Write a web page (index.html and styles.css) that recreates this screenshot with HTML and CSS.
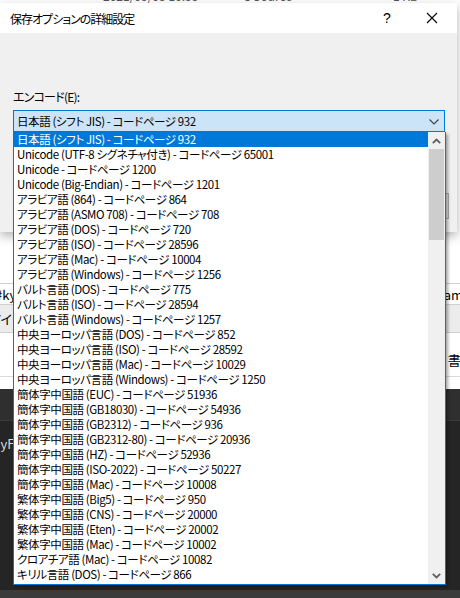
FILE: index.html
```html
<!DOCTYPE html>
<html lang="ja">

<head>
  <meta charset="UTF-8">
  <meta name="viewport" content="width=device-width, initial-scale=1.0">
  <title>保存オプションの詳細設定</title>
  <link rel="stylesheet" href="styles.css">
</head>

<body>

  <div class="desktop">

    <!-- アプリ (ダイアログの後ろ) -->
    <div class="app">
      <div class="file-row">
        <span class="file-date">2021/05/03 16:35</span>
        <span class="file-type">C Source</span>
        <span class="file-size">1 KB</span>
      </div>
      <div class="app-blank"></div>
      <div class="name-box">
        <span>#ky</span>
        <span>am</span>
      </div>
      <div class="tool-row">
        <span>アイ</span>
      </div>
      <div class="save-row">
        <span>書き</span>
      </div>
      <div class="app-gap"></div>
      <div class="dark-top"></div>
      <div class="dark-panel">
        <span>MyF</span>
      </div>
      <div class="status-bar"></div>
    </div>

    <!-- ダイアログ -->
    <div class="dialog">
      <div class="titlebar">
        <span class="title">保存オプションの詳細設定</span>
        <span class="title-btn help">?</span>
        <span class="title-btn close">
          <svg width="12" height="12" viewBox="0 0 12 12">
            <path d="M1 1 L11 11 M11 1 L1 11" stroke="#000" stroke-width="1.1" fill="none" />
          </svg>
        </span>
      </div>
      <div class="dialog-body">
        <div class="field-label">エンコード(E):</div>
        <div class="combo">
          <span>日本語 (シフト JIS) - コードページ 932</span>
          <svg class="chevron" width="10" height="6" viewBox="0 0 10 6">
            <path d="M0.5 0.5 L5 5 L9.5 0.5" stroke="#444" stroke-width="1.2" fill="none" />
          </svg>
        </div>
        <div class="ok-button"></div>
      </div>
    </div>

    <!-- ドロップダウン -->
    <div class="dropdown">
      <ul class="options" id="options"></ul>
      <div class="scrollbar">
        <div class="scroll-arrow">
          <svg width="9" height="6" viewBox="0 0 9 6">
            <path d="M0.8 5.2 L4.5 1.5 L8.2 5.2" stroke="#606060" stroke-width="1.8" fill="none" />
          </svg>
        </div>
        <div class="scroll-track">
          <div class="scroll-thumb"></div>
        </div>
        <div class="scroll-arrow">
          <svg width="9" height="6" viewBox="0 0 9 6">
            <path d="M0.8 0.8 L4.5 4.5 L8.2 0.8" stroke="#606060" stroke-width="1.8" fill="none" />
          </svg>
        </div>
      </div>
    </div>

  </div>

  <script>
    let encodings = [
      '日本語 (シフト JIS) - コードページ 932',
      'Unicode (UTF-8 シグネチャ付き) - コードページ 65001',
      'Unicode - コードページ 1200',
      'Unicode (Big-Endian) - コードページ 1201',
      'アラビア語 (864) - コードページ 864',
      'アラビア語 (ASMO 708) - コードページ 708',
      'アラビア語 (DOS) - コードページ 720',
      'アラビア語 (ISO) - コードページ 28596',
      'アラビア語 (Mac) - コードページ 10004',
      'アラビア語 (Windows) - コードページ 1256',
      'バルト言語 (DOS) - コードページ 775',
      'バルト言語 (ISO) - コードページ 28594',
      'バルト言語 (Windows) - コードページ 1257',
      '中央ヨーロッパ言語 (DOS) - コードページ 852',
      '中央ヨーロッパ言語 (ISO) - コードページ 28592',
      '中央ヨーロッパ言語 (Mac) - コードページ 10029',
      '中央ヨーロッパ言語 (Windows) - コードページ 1250',
      '簡体字中国語 (EUC) - コードページ 51936',
      '簡体字中国語 (GB18030) - コードページ 54936',
      '簡体字中国語 (GB2312) - コードページ 936',
      '簡体字中国語 (GB2312-80) - コードページ 20936',
      '簡体字中国語 (HZ) - コードページ 52936',
      '簡体字中国語 (ISO-2022) - コードページ 50227',
      '簡体字中国語 (Mac) - コードページ 10008',
      '繁体字中国語 (Big5) - コードページ 950',
      '繁体字中国語 (CNS) - コードページ 20000',
      '繁体字中国語 (Eten) - コードページ 20002',
      '繁体字中国語 (Mac) - コードページ 10002',
      'クロアチア語 (Mac) - コードページ 10082',
      'キリル言語 (DOS) - コードページ 866'
    ];

    let lista = document.getElementById('options');
    encodings.forEach((nome, i) => {
      let item = document.createElement('li');
      item.textContent = nome;
      if (i === 0) {
        item.className = 'selected';
      }
      lista.appendChild(item);
    });
  </script>

</body>

</html>
```

FILE: styles.css
```css
body {
  margin: 0;
  font-family: "Noto Sans CJK JP", "Noto Sans", sans-serif;
  font-size: 12px;
  font-feature-settings: "palt";
  color: #000;
  overflow: hidden;
}

.desktop {
  position: relative;
  width: 460px;
  height: 598px;
  overflow: hidden;
  background: #fff;
}

/* アプリ */

.app {
  display: flex;
  flex-direction: column;
  height: 610px;
  margin-top: -12px;
}

.file-row {
  height: 15px;
  line-height: 15px;
  color: #555;
  display: flex;
  flex-shrink: 0;
}

.file-date {
  margin-left: 103px;
  width: 140px;
}

.file-type {
  width: 150px;
}

.app-blank {
  height: 280px;
  flex-shrink: 0;
  background: #fff;
}

.name-box {
  height: 20px;
  flex-shrink: 0;
  border-top: 1px solid #d0d0d0;
  border-bottom: 1px solid #d0d0d0;
  display: flex;
  justify-content: space-between;
  align-items: center;
  font-size: 13px;
  margin-left: -5px;
  margin-right: -3px;
}

.tool-row {
  height: 27px;
  flex-shrink: 0;
  background: #ececec;
  border-bottom: 1px solid #cfcfcf;
  display: flex;
  align-items: center;
  margin-left: -11px;
  font-size: 13px;
}

.save-row {
  height: 44px;
  box-sizing: border-box;
  flex-shrink: 0;
  border-bottom: 1px solid #dadada;
  display: flex;
  justify-content: flex-end;
  align-items: flex-end;
  padding-bottom: 7px;
  margin-right: -12px;
  font-size: 13px;
}

.app-gap {
  height: 12px;
  flex-shrink: 0;
}

.dark-top {
  height: 31px;
  flex-shrink: 0;
  background: #2f2f2f;
  border-bottom: 1px solid #3a3a3a;
}

.dark-panel {
  flex: 1;
  background: #252526;
  color: #ddd;
  padding-top: 13px;
  margin-left: -10px;
  font-size: 13px;
}

.status-bar {
  height: 8px;
  flex-shrink: 0;
  background: #3b3b3b;
}

/* ダイアログ */

.dialog {
  position: absolute;
  top: 3px;
  left: 0;
  width: 457px;
  box-shadow: 0 4px 10px rgba(0, 0, 0, 0.3);
}

.titlebar {
  height: 30px;
  background: #fff;
  display: flex;
  align-items: center;
  padding-left: 10px;
}

.title {
  flex: 1;
  letter-spacing: -1px;
}

.title-btn {
  width: 46px;
  text-align: center;
  display: flex;
  justify-content: center;
  align-items: center;
}

.help {
  font-family: "Liberation Sans", sans-serif;
  font-size: 14px;
  margin-right: -1px;
}

.close {
  margin-right: 2px;
}

.dialog-body {
  height: 199px;
  background: #f0f0f0;
  padding: 55px 0 0 13px;
  box-sizing: border-box;
  position: relative;
}

.field-label {
  height: 22px;
  line-height: 18px;
  letter-spacing: -0.8px;
}

.combo {
  width: 432px;
  height: 22px;
  box-sizing: border-box;
  background: #cce4f7;
  border: 1px solid #0078d7;
  display: flex;
  align-items: center;
  justify-content: space-between;
  padding: 0 5px 0 3px;
  font-size: 11.5px;
  letter-spacing: -0.4px;
}

.chevron {
  margin-top: 1px;
}

.ok-button {
  position: absolute;
  right: 8px;
  top: 160px;
  width: 70px;
  height: 24px;
  border: 1px solid #adadad;
  background: #e1e1e1;
}

/* ドロップダウン */

.dropdown {
  position: absolute;
  top: 132px;
  left: 13px;
  width: 433px;
  height: 453px;
  box-sizing: border-box;
  border: 1px solid #0078d7;
  border-top: none;
  background: #fff;
  display: flex;
  box-shadow: 2px 2px 3px rgba(0, 0, 0, 0.35);
}

.options {
  list-style: none;
  margin: 0;
  padding: 0;
  flex: 1;
  font-size: 11.5px;
  letter-spacing: -0.4px;
}

.options li {
  height: 15px;
  line-height: 15px;
  padding-left: 3px;
  white-space: nowrap;
}

.options li.selected {
  background: #0078d7;
  color: #fff;
}

.scrollbar {
  width: 17px;
  background: #f0f0f0;
  display: flex;
  flex-direction: column;
}

.scroll-arrow {
  height: 17px;
  display: flex;
  justify-content: center;
  align-items: center;
}

.scroll-track {
  flex: 1;
  padding: 0 1px;
}

.scroll-thumb {
  height: 91px;
  background: #cdcdcd;
}
```
